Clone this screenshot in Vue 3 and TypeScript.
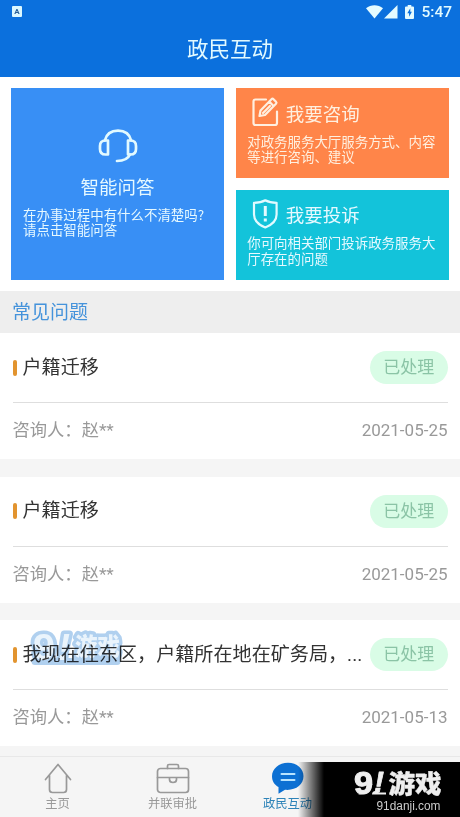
<script setup lang="ts">
interface Question {
  title: string
  person: string
  date: string
  status: string
}

const questions: Question[] = [
  { title: '户籍迁移', person: '赵**', date: '2021-05-25', status: '已处理' },
  { title: '户籍迁移', person: '赵**', date: '2021-05-25', status: '已处理' },
  { title: '我现在住东区，户籍所在地在矿务局，...', person: '赵**', date: '2021-05-13', status: '已处理' },
]
</script>

<template>
  <div class="screen">
    <header class="header">
      <div class="status">
        <span class="ime">A</span>
        <div class="status-right">
          <svg class="wifi" width="17" height="14" viewBox="0 0 17 14"><path d="M0 3.2C4.8-.9 12.200-.9 17 3.200L8.500 13.500Z" /></svg>
          <svg class="signal" width="14" height="14" viewBox="0 0 14 14"><path d="M13.500 0V13.500H0Z" /></svg>
          <svg class="battery" width="9" height="14" viewBox="0 0 9 14">
            <path d="M2.700 0H6.300V1.400H8Q9 1.400 9 2.400V13Q9 14 8 14H1Q0 14 0 13V2.400Q0 1.400 1 1.400H2.700Z" />
            <path class="bolt" d="M5.300 3.200L2.300 8.200H4.100V11.800L6.900 6.800H5.300Z" />
          </svg>
          <span class="clock">5:47</span>
        </div>
      </div>
      <h1 class="title">政民互动</h1>
    </header>

    <section class="cards">
      <article class="card smart">
        <svg class="headset" width="40" height="34" viewBox="0 0 40 34">
          <path d="M6.800 11.500C8.500 5 13.500 1.700 20 1.700S31.500 5 33.200 11.500" />
          <path d="M10 11.500V25.500H7.500Q2 25.500 2 20V17Q2 11.500 7.500 11.500Z" />
          <path d="M30 11.500V25.500H32.500Q38 25.500 38 20V17Q38 11.500 32.500 11.500Z" />
          <path d="M32 25.500C30 30 26 32 19 32" />
        </svg>
        <h2>智能问答</h2>
        <p>在办事过程中有什么不清楚吗?<br />请点击智能问答</p>
      </article>
      <article class="card ask">
        <div class="card-head">
          <svg width="28" height="30" viewBox="0 0 28 30">
            <path d="M15 2.500H4.500Q2.500 2.500 2.500 4.500V26Q2.500 28 4.500 28H24Q26 28 26 26V14.500" />
            <path d="M8.500 19L9.500 13.500L20.500 2.200Q21.500 1.200 22.500 2.200L25 4.700Q26 5.700 25 6.700L14 18ZM18.500 4.800L22.500 9M12 16L19 9" />
          </svg>
          <h2>我要咨询</h2>
        </div>
        <p>对政务服务大厅服务方式、内容<br />等进行咨询、建议</p>
      </article>
      <article class="card complain">
        <div class="card-head">
          <svg width="28" height="30" viewBox="0 0 28 30">
            <path d="M14.300 1.300C10.800 3.300 7.300 3.800 3 3.800V15.500C3 21.500 8 26 14.300 28.500C20.500 26 25.600 21.500 25.600 15.500V3.800C21.300 3.800 17.800 3.300 14.300 1.300Z" />
            <path class="mark" d="M14.300 7V17M14.300 19.500V22.500" />
          </svg>
          <h2>我要投诉</h2>
        </div>
        <p>你可向相关部门投诉政务服务大<br />厅存在的问题</p>
      </article>
    </section>

    <h2 class="section-title">常见问题</h2>

    <main class="list">
      <article v-for="(q, i) in questions" :key="i" class="item">
        <div class="item-top">
          <i class="bar"></i>
          <h3>{{ q.title }}</h3>
          <span class="badge">{{ q.status }}</span>
        </div>
        <div class="item-bottom">
          <span class="person">咨询人：{{ q.person }}</span>
          <time>{{ q.date }}</time>
        </div>
      </article>
    </main>

    <nav class="tabs">
      <a class="tab">
        <svg width="28" height="32" viewBox="0 0 28 32">
          <path d="M1.500 17.500L14 2.500L26.500 17.500M5.500 13.500V27.500Q5.500 30.500 8.500 30.500H19.500Q22.500 30.500 22.500 27.500V13.500" />
        </svg>
        <span>主页</span>
      </a>
      <a class="tab">
        <svg width="34" height="32" viewBox="0 0 34 32">
          <rect x="1.500" y="6.500" width="31" height="24" rx="3" />
          <path d="M11.500 6.500V4Q11.500 2.500 13 2.500H21Q22.500 2.500 22.500 4V6.500M1.500 15.500H32.500M13.500 15.500V17.500Q13.500 20.500 17 20.500T20.500 17.500V15.500" />
        </svg>
        <span>并联审批</span>
      </a>
      <a class="tab active">
        <svg width="34" height="32" viewBox="0 0 34 32">
          <path class="bubble" d="M17 .8C8 .8 1 6.800 1 14.300C1 19.300 3.500 22.800 7.500 25.100V31.800L14 27.800C24.500 28.800 32.500 22.800 32.500 14.300C32.500 6.800 26 .8 17 .8Z" />
          <path class="lines" d="M10.500 12H23.500M10.500 18H23.500" />
        </svg>
        <span>政民互动</span>
      </a>
      <span class="tab"></span>
    </nav>

    <svg class="watermark" width="102" height="44" viewBox="0 0 102 44">
      <path class="base" d="M10 35.500H92" />
      <text class="nine" x="8" y="34" textLength="22" lengthAdjust="spacingAndGlyphs">9</text>
      <text class="one" x="33" y="34">!</text>
      <text class="game" x="50" y="29" textLength="45" lengthAdjust="spacingAndGlyphs">游戏</text>
    </svg>

    <div class="brand">
      <svg width="100" height="55" viewBox="0 0 100 55">
        <text class="nine" x="0" y="32" textLength="19" lengthAdjust="spacingAndGlyphs">9</text>
        <text class="one" x="20" y="30">!</text>
        <path d="M4 32.500C9 31 13 27 16 21L18.500 22C16 29 11 33 4 32.500ZM18 32.500Q18 29 21.500 29Q24 29 25 30.500H32V32.500Z" />
        <text class="game" x="34.500" y="30.500" textLength="53" lengthAdjust="spacingAndGlyphs">游戏</text>
        <text class="url" x="22.500" y="48" textLength="64" lengthAdjust="spacingAndGlyphs">91danji.com</text>
      </svg>
    </div>
  </div>
</template>

<style>
body {
  margin: 0;
}
</style>

<style scoped>
.screen {
  position: relative;
  display: flex;
  flex-direction: column;
  width: 460px;
  height: 817px;
  overflow: hidden;
  background: #f5f5f5;
  font-family: Roboto, "Noto Sans CJK SC", sans-serif;
}
h1, h2, h3, p {
  margin: 0;
  font-weight: 400;
}
svg {
  display: block;
  fill: none;
  stroke-linecap: round;
  stroke-linejoin: round;
}
.header {
  height: 76.500px;
  background: #0b70dd;
  color: #e2faff;
}
.status {
  display: flex;
  justify-content: space-between;
  align-items: center;
  height: 23px;
  padding: 0 8px 0 12px;
}
.ime {
  width: 10px;
  height: 11px;
  border-radius: 1px;
  background: #dcf8ff;
  color: #2a5f98;
  font: bold 8px/11px Roboto, sans-serif;
  text-align: center;
}
.status-right {
  display: flex;
  align-items: center;
}
.status-right svg {
  fill: #e4fbff;
}
.signal {
  margin-left: 1px;
}
.battery {
  margin: 0 7px 0 7px;
}
.battery .bolt {
  fill: #0b70dd;
}
.clock {
  padding-top: 2px;
  font-size: 15.500px;
  font-weight: 500;
  line-height: 23px;
}
.title {
  padding-top: 12px;
  font-size: 21.500px;
  line-height: 30px;
  text-align: center;
}
.cards {
  display: grid;
  grid-template: 90px 90px / 213px 213px;
  gap: 11.500px 11.700px;
  padding: 11.500px 11px;
  background: #fff;
}
.card {
  color: #e6f9ff;
}
.card h2 {
  font-size: 18.500px;
  line-height: 26px;
}
.card p {
  font-family: "Noto Sans CJK SC", sans-serif;
  font-size: 13.450px;
  line-height: 15.500px;
  white-space: nowrap;
}
.card svg {
  stroke: #e2faff;
  stroke-width: 2.700;
}
.smart {
  grid-row: span 2;
  display: flex;
  flex-direction: column;
  align-items: center;
  background: #388ff5;
}
.smart .headset {
  margin: 41px 0 12px;
}
.smart p {
  align-self: flex-start;
  padding: 5.500px 0 0 12px;
}
.ask {
  background: #ff8549;
  color: #fff0e0;
}
.ask svg {
  stroke: #ffefe0;
}
.complain {
  background: #13c3da;
}
.card-head {
  display: flex;
  align-items: center;
  gap: 7px;
  padding: 9px 0 0 15px;
  height: 30px;
}
.ask p,
.complain p {
  padding: 6.500px 0 0 11.500px;
}
.card-head h2 {
  padding-top: 5px;
}
.card-head svg {
  stroke-width: 2.200;
}
.card-head .mark {
  stroke-width: 3;
  stroke-linecap: butt;
}
.section-title {
  height: 42px;
  padding-left: 12px;
  background: #eee;
  color: #4593db;
  font-size: 19px;
  line-height: 44px;
}
.list {
  display: flex;
  flex-direction: column;
  gap: 17.500px;
}
.item {
  box-sizing: border-box;
  height: 126px;
  padding: 0 12.500px;
  background: #fff;
}
.item-top {
  display: flex;
  align-items: center;
  height: 69px;
  border-bottom: 1px solid #dedede;
}
.bar {
  width: 4px;
  height: 16px;
  margin-right: 6px;
  border-radius: 2px;
  background: #e2942f;
}
.item h3 {
  flex: none;
  width: 341px;
  color: #333;
  font-size: 19.100px;
  line-height: 30px;
  white-space: nowrap;
}
.badge {
  flex: none;
  width: 77.500px;
  height: 33px;
  margin-left: 6.500px;
  border-radius: 17px;
  background: #d9fce6;
  color: #8bc4a6;
  font-size: 17px;
  line-height: 33px;
  text-align: center;
}
.item-bottom {
  display: flex;
  justify-content: space-between;
  color: #999;
  font-size: 17px;
  line-height: 55px;
}
.person {
  font-size: 17.300px;
}
.tabs {
  display: grid;
  grid-template-columns: repeat(4, 1fr);
  height: 60px;
  margin-top: auto;
  border-top: 1px solid #e8e8e8;
}
.tab {
  display: flex;
  flex-direction: column;
  align-items: center;
  padding-top: 5px;
  color: #999;
  font-size: 12.300px;
  line-height: 16px;
}
.tab svg {
  margin-bottom: 2px;
  stroke: #999;
  stroke-width: 1.700;
}
.tab.active {
  color: #2d83b8;
}
.tab .bubble {
  fill: #0d70d3;
  stroke: none;
}
.tab .lines {
  stroke: #b9e4ff;
  stroke-width: 2;
}
.nine,
.one {
  font-family: "Liberation Sans", sans-serif;
  font-weight: 700;
}
.one {
  font-style: italic;
}
.game {
  font-family: "Noto Sans CJK SC", sans-serif;
  font-weight: 900;
}
.watermark {
  position: absolute;
  left: 25px;
  top: 626px;
  fill: #eaf4fc;
  stroke: #b0d0ef;
  stroke-width: 7;
  paint-order: stroke;
  mix-blend-mode: multiply;
}
.watermark .nine {
  font-size: 37px;
}
.watermark .one {
  font-size: 36px;
}
.watermark .game {
  font-size: 24px;
}
.brand {
  position: absolute;
  right: 0;
  bottom: 0;
  display: flex;
  justify-content: flex-end;
  width: 162px;
  height: 55px;
  background: linear-gradient(90deg, rgba(0, 0, 0, 0), #000 26px);
}
.brand svg {
  fill: #eee;
  margin-right: 6px;
}
.brand .nine {
  font-size: 31px;
  stroke: #eee;
  stroke-width: 1;
}
.brand .one {
  font-size: 30px;
  stroke: #eee;
  stroke-width: .8;
}
.brand .game {
  font-size: 25px;
  stroke: #eee;
  stroke-width: .4;
}
.brand .url {
  fill: #ccc;
  font: 12px "Liberation Sans", sans-serif;
}
</style>
